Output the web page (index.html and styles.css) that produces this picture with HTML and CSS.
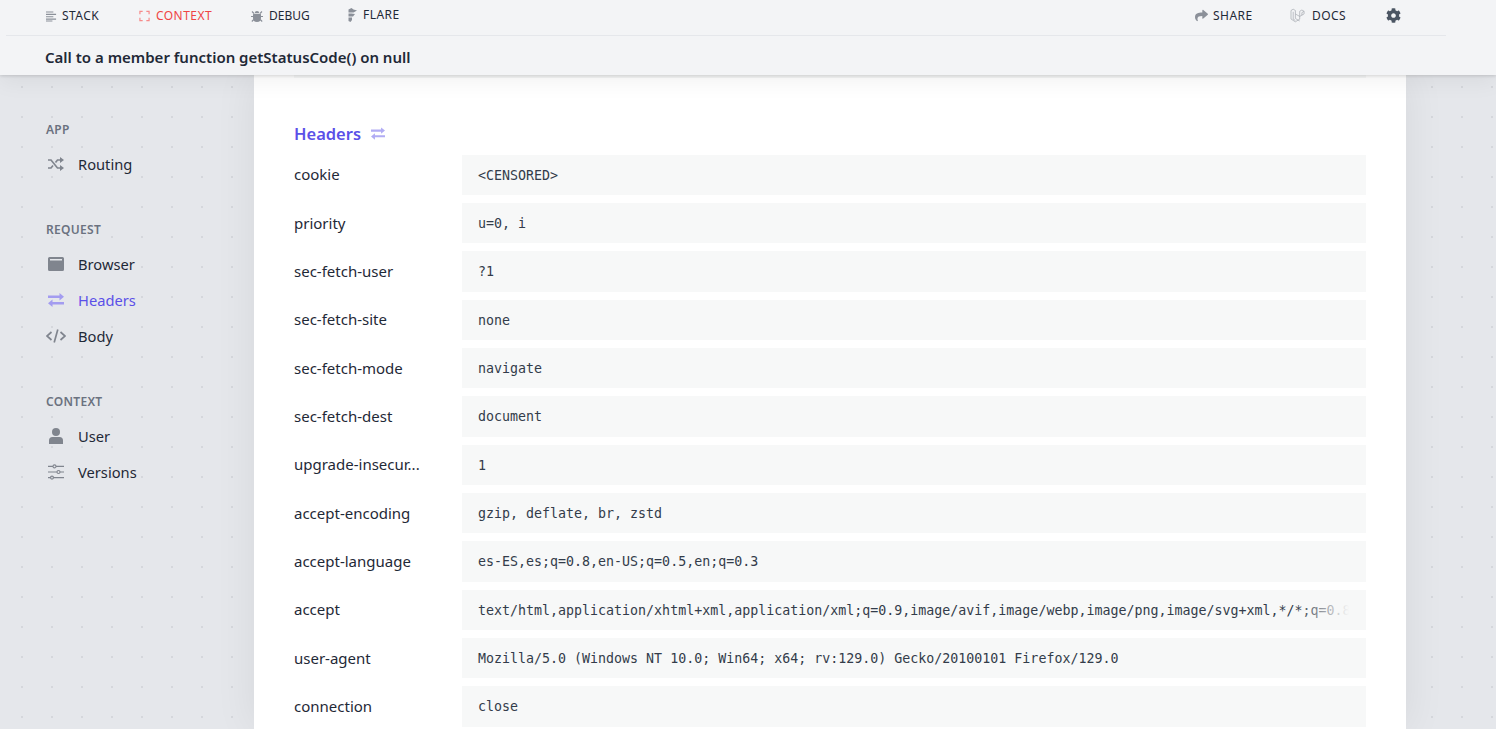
FILE: index.html
```html
<!DOCTYPE html>
<html>

<head>
  <meta charset="utf-8">
  <title>Call to a member function getStatusCode() on null</title>
  <link rel="stylesheet" href="styles.css">
</head>

<body>
  <header class="topbar">
    <nav class="tabs">
      <div class="tabs-left">
        <a class="tab tab-stack">
          <svg class="tab-icon" viewBox="0 0 12 12"><path d="M0 1h8v1.200H0zM0 3.600h11v1.200H0zM0 6.200h8v1.200H0zM0 8.800h11V10H0zM0 11h7v1H0z"/></svg>
          Stack
        </a>
        <a class="tab tab-context tab-active">
          <svg class="tab-icon" viewBox="0 0 12 12"><path d="M1 4V1h3M8 1h3v3M11 8v3H8M4 11H1V8" fill="none" stroke-width="1.300"/></svg>
          Context
        </a>
        <a class="tab tab-debug">
          <svg class="tab-icon" viewBox="0 0 12 12"><path d="M3.800 3a2.200 2 0 0 1 4.400 0zM3 3.800h6a1 1 0 0 1 1 1V8a4 4 0 0 1-8 0V4.800a1 1 0 0 1 1-1z"/><path d="M1 1.500l2 2M11 1.500l-2 2M0 6.500h2M10 6.500h2M.8 11.500l2-2M11.200 11.500l-2-2" fill="none" stroke-width="1.100"/></svg>
          Debug
        </a>
        <a class="tab tab-flare">
          <svg class="tab-icon flare-icon" viewBox="0 0 9 14"><path d="M.5 1.500L3.500 0l2 1.500L9 2.500 5.500 4.500H.5zM.5 5.500h3l3.500.5-2 2.500h-4.500zM.5 9.500h3.500V12l-1.500 2-2-1z"/></svg>
          Flare
        </a>
      </div>
      <div class="tabs-right">
        <a class="tab tab-share">
          <svg class="tab-icon" viewBox="0 0 512 512"><path d="M503.700 189.800L327.700 37.900C312.300 24.500 288 35.300 288 56v80.100C127.400 137.900 0 170.100 0 322.300c0 61.400 39.600 122.300 83.300 154.100 13.700 9.900 33.100-2.500 28.100-18.600C66 312.800 132.900 274.300 288 272.100V360c0 20.700 24.300 31.500 39.700 18.200l176-152c11.100-9.600 11.100-26.800 0-36.400z"/></svg>
          Share
        </a>
        <a class="tab tab-docs">
          <svg class="tab-icon docs-icon" viewBox="0 0 16 16"><path d="M1 2.500l2.200-1.300 2.200 1.300v8l4.300 2.500M1 2.500v8.500l4.300 2.800 4.400-2.600v-3M3.200 3.800v7.400l2.100 1.200M5.400 6l4.300 2.400 4.400-2.500V3.300L11.900 2 9.700 3.300v5.100M11.900 4.600l2.200-1.300M11.900 4.600v2.600" fill="none" stroke-width=".7"/></svg>
          Docs
        </a>
        <a class="tab tab-settings">
          <svg class="gear-icon" viewBox="0 0 512 512"><path d="M487.400 315.700l-42.600-24.600c4.300-23.200 4.300-47 0-70.200l42.600-24.600c4.900-2.800 7.100-8.600 5.500-14-11.100-35.600-30-67.800-54.700-94.600-3.800-4.100-10-5.100-14.800-2.300L380.800 110c-17.900-15.400-38.500-27.300-60.800-35.100V25.800c0-5.600-3.900-10.500-9.400-11.700-36.700-8.200-74.300-7.800-109.200 0-5.500 1.200-9.400 6.100-9.400 11.700V75c-22.200 7.900-42.800 19.800-60.800 35.100L88.700 85.500c-4.900-2.800-11-1.900-14.800 2.300-24.700 26.700-43.600 58.900-54.700 94.600-1.700 5.400.6 11.200 5.500 14L67.300 221c-4.300 23.200-4.300 47 0 70.200l-42.600 24.600c-4.900 2.800-7.100 8.600-5.500 14 11.100 35.600 30 67.800 54.700 94.600 3.800 4.100 10 5.100 14.800 2.300l42.600-24.600c17.900 15.400 38.500 27.300 60.800 35.100v49.200c0 5.600 3.900 10.500 9.400 11.700 36.700 8.200 74.300 7.800 109.200 0 5.500-1.200 9.400-6.100 9.400-11.700v-49.200c22.200-7.900 42.800-19.800 60.800-35.100l42.600 24.600c4.900 2.800 11 1.900 14.800-2.300 24.700-26.700 43.600-58.900 54.700-94.600 1.500-5.500-.7-11.300-5.600-14.100zM256 336c-44.100 0-80-35.900-80-80s35.900-80 80-80 80 35.900 80 80-35.900 80-80 80z"/></svg>
        </a>
      </div>
    </nav>
    <h1 class="message">Call to a member function getStatusCode() on null</h1>
  </header>

  <div class="page">
    <aside class="sidebar">
      <section class="side-group">
        <h3 class="side-title">App</h3>
        <a class="side-link">
          <svg class="side-icon" viewBox="0 0 16 14"><path d="M0 3h3l6.500 8H12M0 11h3l2-2.500M7.500 5.500L9.500 3H12" fill="none" stroke-width="1.700"/><path d="M12 0l4 3-4 3zM12 8l4 3-4 3z"/></svg>
          Routing
        </a>
      </section>
      <section class="side-group">
        <h3 class="side-title">Request</h3>
        <a class="side-link">
          <svg class="side-icon" viewBox="0 0 16 14"><path fill-rule="evenodd" d="M1.500 0h13A1.500 1.500 0 0 1 16 1.500v11a1.500 1.500 0 0 1-1.500 1.500h-13A1.500 1.500 0 0 1 0 12.500v-11A1.500 1.500 0 0 1 1.500 0zM2 2v1.500h12V2z"/></svg>
          Browser
        </a>
        <a class="side-link side-active">
          <svg class="side-icon" viewBox="0 0 16 16"><path d="M0 3.500h11.500V1L16 4.700l-4.500 3.700V5.900H0zM16 10H4.500V7.600L0 11.300 4.500 15v-2.600H16z"/></svg>
          Headers
        </a>
        <a class="side-link">
          <svg class="side-icon side-icon-wide" viewBox="0 0 20 14"><path d="M5.500 3L1 7l4.500 4M14.500 3L19 7l-4.500 4M11.800.5L8.200 13.500" fill="none" stroke-width="1.700"/></svg>
          Body
        </a>
      </section>
      <section class="side-group">
        <h3 class="side-title">Context</h3>
        <a class="side-link">
          <svg class="side-icon" viewBox="0 0 16 16"><circle cx="8" cy="4" r="4"/><path d="M4.500 9h7A3.500 3.500 0 0 1 15 12.500V16H1v-3.500A3.500 3.500 0 0 1 4.500 9z"/></svg>
          User
        </a>
        <a class="side-link">
          <svg class="side-icon" viewBox="0 0 16 16"><path d="M0 2.400h5M8 2.400h8M0 8h9M12 8h4M0 13.600h2.500M5.500 13.600H16" fill="none" stroke-width="1.200"/><circle cx="6.500" cy="2.400" r="1.500" fill="none" stroke-width="1.100"/><circle cx="10.500" cy="8" r="1.500" fill="none" stroke-width="1.100"/><circle cx="4" cy="13.600" r="1.500" fill="none" stroke-width="1.100"/></svg>
          Versions
        </a>
      </section>
    </aside>

    <main class="card">
      <div class="card-fade"></div>
      <h2 class="section-title">
        Headers
        <svg class="title-icon" viewBox="0 0 16 16"><path d="M0 3.500h11.500V1L16 4.700l-4.500 3.700V5.900H0zM16 10H4.500V7.600L0 11.300 4.500 15v-2.600H16z"/></svg>
      </h2>
      <dl class="rows">
        <div class="row"><dt class="row-key">cookie</dt><dd class="row-value">&lt;CENSORED&gt;</dd></div>
        <div class="row"><dt class="row-key">priority</dt><dd class="row-value">u=0, i</dd></div>
        <div class="row"><dt class="row-key">sec-fetch-user</dt><dd class="row-value">?1</dd></div>
        <div class="row"><dt class="row-key">sec-fetch-site</dt><dd class="row-value">none</dd></div>
        <div class="row"><dt class="row-key">sec-fetch-mode</dt><dd class="row-value">navigate</dd></div>
        <div class="row"><dt class="row-key">sec-fetch-dest</dt><dd class="row-value">document</dd></div>
        <div class="row"><dt class="row-key">upgrade-insecur...</dt><dd class="row-value">1</dd></div>
        <div class="row"><dt class="row-key">accept-encoding</dt><dd class="row-value">gzip, deflate, br, zstd</dd></div>
        <div class="row"><dt class="row-key">accept-language</dt><dd class="row-value">es-ES,es;q=0.8,en-US;q=0.5,en;q=0.3</dd></div>
        <div class="row"><dt class="row-key">accept</dt><dd class="row-value row-fade">text/html,application/xhtml+xml,application/xml;q=0.9,image/avif,image/webp,image/png,image/svg+xml,*/*;q=0.8</dd></div>
        <div class="row"><dt class="row-key">user-agent</dt><dd class="row-value">Mozilla/5.0 (Windows NT 10.0; Win64; x64; rv:129.0) Gecko/20100101 Firefox/129.0</dd></div>
        <div class="row"><dt class="row-key">connection</dt><dd class="row-value">close</dd></div>
      </dl>
    </main>
  </div>
</body>

</html>
```

FILE: styles.css
```css
html,
body {
  margin: 0;
  height: 729px;
  overflow: hidden;
}

body {
  font-family: "Noto Sans", sans-serif;
  font-size: 15px;
  color: #1f2937;
  background-color: #e5e7eb;
}

a {
  color: inherit;
  text-decoration: none;
}

/* top bar */
.topbar {
  position: relative;
  z-index: 2;
  height: 75px;
  padding: 0 50px 0 6px;
  background: #f3f4f6;
  box-shadow: 0 1px 3px rgba(0, 0, 0, 0.14), 0 8px 20px rgba(0, 0, 0, 0.05);
}

.tabs {
  display: flex;
  justify-content: space-between;
  height: 35px;
  padding: 0 45px 0 40px;
  border-bottom: 1px solid #e5e7eb;
}

.tabs-left,
.tabs-right {
  display: flex;
  align-items: center;
}

.tab {
  display: flex;
  align-items: center;
  gap: 6px;
  font-size: 12px;
  letter-spacing: 0.45px;
  text-transform: uppercase;
  margin-top: -4px;
}

.tab-stack { width: 93px; }
.tab-context { width: 112px; }
.tab-debug { width: 97px; letter-spacing: 0; }
.tab-share { width: 95px; }
.tab-docs { width: 96px; }

.tab-flare { margin-top: -6px; }

.tab-stack,
.tab-share {
  gap: 5px;
}

.tab-icon {
  width: 11px;
  height: 12px;
  fill: #8b9099;
  stroke: #8b9099;
  stroke-width: 0;
}

.tab-active {
  color: #ef4444;
}

.tab-active .tab-icon {
  fill: none;
  stroke: #f68a8a;
}

.tab-debug .tab-icon {
  width: 12px;
}

.flare-icon {
  width: 9px;
  height: 14px;
}

.tab-share .tab-icon {
  width: 13px;
  height: 13px;
}

.docs-icon {
  width: 16px;
  height: 16px;
  fill: none;
  stroke: #a5a9b0;
}

.gear-icon {
  display: block;
  width: 15px;
  height: 15px;
  fill: #4b5563;
}

.message {
  margin: 0;
  padding: 10px 39px 0;
  font-size: 15px;
  font-weight: 600;
  line-height: 22px;
  color: #1f2937;
}

/* page body */
.page {
  display: flex;
  height: 654px;
  padding-right: 90px;
  background-color: #e5e7eb;
  background-image: radial-gradient(circle at 1px 1px, #d5d7dc .8px, transparent 1.1px);
  background-size: 30px 30px;
  background-position: 21px 11px;
}

.sidebar {
  width: 208px;
  flex: none;
  padding: 46px 0 0 46px;
}

.side-group {
  margin-bottom: 39px;
}

.side-title {
  margin: 0 0 7px;
  font-size: 12px;
  font-weight: 600;
  line-height: 18px;
  letter-spacing: 0.3px;
  color: #6b7280;
  text-transform: uppercase;
}

.side-link {
  display: flex;
  align-items: center;
  height: 36px;
  font-size: 14.7px;
}

.side-icon {
  width: 16px;
  height: 16px;
  margin: 0 14px 0 2px;
  fill: #80858e;
  stroke: #80858e;
  stroke-width: 0;
}

.side-icon-wide {
  width: 20px;
  margin: 0 12px 0 0;
}

.side-active {
  color: #5b50e8;
}

.side-active .side-icon {
  fill: #a39cf0;
}

.card {
  position: relative;
  flex: 1;
  padding: 0 40px;
  background: #fff;
  box-shadow: 0 0 40px rgba(0, 0, 0, 0.07);
  overflow: hidden;
}

.card-fade {
  height: 3px;
  background: #f7f8f8;
}

.section-title {
  display: flex;
  align-items: center;
  gap: 10px;
  margin: 42px 0 7.800px;
  font-size: 16.5px;
  font-weight: 600;
  line-height: 27px;
  color: #5b50e8;
}

.title-icon {
  width: 14px;
  height: 15px;
  fill: #b1acf4;
}

.rows {
  display: flex;
  flex-direction: column;
  gap: 8px;
  margin: 0;
}

.row {
  display: flex;
  align-items: flex-start;
}

.row-key {
  width: 128px;
  flex: none;
  margin-right: 40px;
  padding-top: 8.500px;
  line-height: 22px;
  white-space: nowrap;
}

.row-value {
  position: relative;
  flex: 1;
  min-width: 0;
  margin: 0;
  padding: 0 16px;
  height: 40.33px;
  font-family: "DejaVu Sans Mono", monospace;
  font-size: 13.3px;
  line-height: 42px;
  color: #333c4a;
  background: #f7f8f8;
  white-space: nowrap;
  overflow: hidden;
}

.row-fade::after {
  content: "";
  position: absolute;
  top: 0;
  right: 0;
  bottom: 0;
  width: 70px;
  background: linear-gradient(to right, rgba(247, 248, 248, 0), #f7f8f8 76%);
}
```
